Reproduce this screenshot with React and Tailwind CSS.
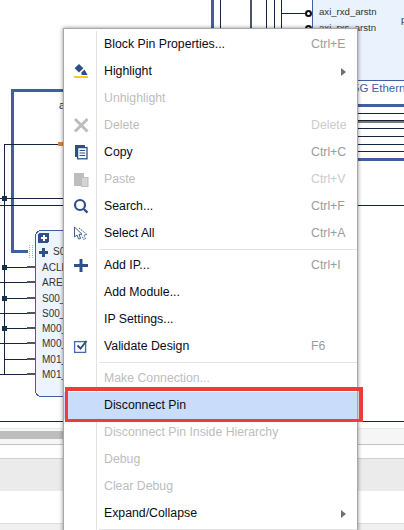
const BLUE = "#3f5f9f";
const NAVY = "#12243f";

function Row({ icon, label, shortcut, disabled, arrow, active, dimShortcut }) {
  return (
    <div className={`flex items-center h-[27px] ${active ? "bg-[#c9ddfb]" : ""}`}>
      <div className={`w-[33px] h-[27px] flex items-center pl-[9px] shrink-0 ${active ? "" : "border-r border-[#e3e3e3]"}`}>{icon}</div>
      <div className={`ml-[7px] pb-[1px] flex-1 whitespace-nowrap ${disabled ? "text-[#bdbdbd]" : "text-[#0b0b14]"}`}>{label}</div>
      <div className={`w-[46px] pb-[1px] shrink-0 whitespace-nowrap ${dimShortcut ? "text-[#cbcbcb]" : "text-[#9c9c9c]"}`}>
        {shortcut}
        {arrow && (
          <svg className="ml-[30px] mt-[2px]" width="5" height="8" viewBox="0 0 5 8"><path d="M0 0L5 4L0 8Z" fill="#707070" /></svg>
        )}
      </div>
    </div>
  );
}

const Sep = () => (
  <div className="flex h-[5px]">
    <div className="w-[33px] shrink-0 border-r border-[#e3e3e3]" />
    <div className="flex-1 pl-[2px] pt-[2px]"><div className="h-px bg-[#e3e3e3]" /></div>
  </div>
);

const Ico = ({ children }) => (
  <svg width="17" height="17" viewBox="0 0 17 17" className="block">{children}</svg>
);

const IconHighlight = () => (
  <Ico>
    <path d="M6 1L10.4 5.2L6 9.6L1.6 5.2Z" fill="#2f4f8a" />
    <path d="M8.5 9.5L11.5 6.5L14.6 12H8.5Z" fill="#2f4f8a" />
    <rect x="1" y="13" width="14" height="2" fill="#f6c92e" />
  </Ico>
);
const IconX = () => (
  <Ico>
    <path d="M2 2L14.5 14.5M14.5 2L2 14.5" stroke="#bdbdbd" strokeWidth="3" fill="none" />
  </Ico>
);
const IconCopy = () => (
  <Ico>
    <rect x="2" y="1" width="10" height="12" fill="#2f4f8a" />
    <rect x="4.6" y="3.6" width="9.4" height="11.2" fill="#fff" stroke="#2f4f8a" strokeWidth="1.3" />
    <path d="M6.5 6.5H12.2M6.5 9H12.2M6.5 11.5H12.2" stroke="#2f4f8a" strokeWidth="1" />
  </Ico>
);
const IconPaste = () => (
  <Ico>
    <rect x="1" y="2" width="10" height="13" fill="#bdbdbd" />
    <rect x="8.5" y="6.5" width="6.5" height="9" fill="#d4d4d4" stroke="#bdbdbd" strokeWidth="1" />
  </Ico>
);
const IconSearch = () => (
  <Ico>
    <circle cx="7" cy="7" r="5" fill="none" stroke="#2f4f8a" strokeWidth="2.2" />
    <path d="M10.8 11L14.5 14.7" stroke="#2f4f8a" strokeWidth="2.4" />
  </Ico>
);
const IconSelect = () => (
  <Ico>
    <path d="M1.5 2L9 9.2L6 9.4L7.6 13.6L5.6 14L4 10L1.5 12Z" fill="#fff" stroke="#3d5a92" strokeWidth="1" />
    <path d="M6 3L14 9.6L11 10L12.6 13.6L10.6 14.4L9 10.8" fill="none" stroke="#3d5a92" strokeWidth="1" strokeDasharray="1.5 0.8" />
  </Ico>
);
const IconPlus = () => (
  <Ico>
    <path d="M1 8.5H15M8 2V15" stroke="#2f4f8a" strokeWidth="3" />
  </Ico>
);
const IconValidate = () => (
  <Ico>
    <rect x="1.6" y="3.6" width="11" height="10.8" fill="#fff" stroke="#4a6aa4" strokeWidth="1.3" />
    <path d="M4.5 7.5L7.5 10.5L13.5 3" fill="none" stroke="#2f4f8a" strokeWidth="2" />
  </Ico>
);

const pinLabels = ["ACLK", "ARESI", "S00_", "S00_", "M00_", "M00_", "M01_", "M01_"];
const pins = [267, 282, 298, 313, 328, 343, 359, 374];

function Diagram() {
  return (
    <svg className="block" width="404" height="421" viewBox="0 0 404 421" shapeRendering="crispEdges">
      <rect x="211" y="0" width="3" height="30" fill={BLUE} />
      <rect x="220" y="0" width="1" height="30" fill={NAVY} />
      <rect x="250" y="0" width="2" height="30" fill="#4a5566" />
      <rect x="266" y="0" width="1" height="30" fill={NAVY} />
      <rect x="274" y="0" width="1" height="30" fill={NAVY} />
      <rect x="281" y="0" width="1" height="30" fill={NAVY} />
      <path d="M281.5 30V13.5H308" fill="none" stroke={NAVY} />
      <rect x="312" y="-2" width="100" height="82" fill="#e9f2fd" stroke={BLUE} />
      <circle cx="308.5" cy="13.5" r="2.5" fill="#fff" stroke="#111" strokeWidth="2" shapeRendering="auto" />
      <circle cx="308.5" cy="28.5" r="2.5" fill="#fff" stroke="#111" strokeWidth="2" shapeRendering="auto" />
      <g fontSize="9.6" fill="#333" shapeRendering="auto">
        <text x="319" y="15">axi_rxd_arstn</text>
        <text x="319" y="31">axi_rxs_arstn</text>
        <text x="401" y="23">p</text>
      </g>
      <text x="353" y="92" fontSize="11.5" fill={BLUE}>5G Ethern</text>
      <rect x="358" y="104" width="46" height="3" fill={BLUE} />
      <rect x="358" y="113" width="46" height="1" fill={NAVY} />
      <rect x="358" y="120" width="46" height="1" fill={NAVY} />
      <rect x="358" y="121" width="46" height="2" fill="#777" />
      <rect x="358" y="128" width="46" height="1" fill={NAVY} />
      <rect x="358" y="136" width="46" height="1" fill={NAVY} />
      <rect x="358" y="144" width="46" height="1" fill={NAVY} />
      <rect x="358" y="151" width="46" height="1" fill={NAVY} />
      <rect x="358" y="158" width="46" height="3" fill={BLUE} />
      <rect x="358" y="205" width="46" height="1" fill={NAVY} />
      <path d="M63 90.5H12.5V251.5H28" fill="none" stroke={BLUE} strokeWidth="3" />
      <text x="59" y="109" fontSize="11" fill="#333">a</text>
      <rect x="4" y="144" width="59" height="1" fill={NAVY} />
      <rect x="4" y="144" width="1" height="231" fill={NAVY} />
      <rect x="58" y="142" width="5" height="4" fill="#e8812f" />
      <rect x="0" y="198" width="63" height="1" fill={NAVY} />
      <rect x="0" y="205" width="63" height="1" fill={NAVY} />
      <rect x="2" y="196" width="5" height="5" fill="#14304f" />
      <rect x="35.5" y="230.5" width="40" height="166" rx="6" fill="#eef4fd" stroke={BLUE} />
      <rect x="38" y="233" width="11" height="10" rx="2" fill="#2f4f8a" />
      <path d="M40.5 238H46.5M43.5 235V241" stroke="#fff" strokeWidth="2" />
      <path d="M39 252.5H48M43.5 248V257" stroke="#2f4f8a" strokeWidth="2.4" />
      <path d="M29.5 245V258M32.5 245V258" stroke="#8fb0d8" strokeWidth="1" strokeDasharray="1 1" />
      <text x="53" y="255" fontSize="10" fill="#333">S0</text>
      {pins.map((y, i) => (
        <g key={y}>
          <rect x={i % 2 === 0 ? 4 : 0} y={y} width={i % 2 === 0 ? 24 : 28} height="1" fill={NAVY} />
          <rect x="27" y={y - 1} width="8" height="2" fill="#555" />
          <text x="42" y={y + 4} fontSize="10" fill="#333">{pinLabels[i]}</text>
        </g>
      ))}
      {[267, 298, 328].map((y) => (
        <rect key={y} x="2" y={y - 2} width="5" height="5" fill="#14304f" />
      ))}
    </svg>
  );
}

export default function App() {
  return (
    <div className="relative w-[404px] h-[530px] overflow-hidden bg-white font-['Liberation_Sans',sans-serif] text-[12.3px] leading-none">
      <Diagram />
      <div className="h-px bg-[#1b2a44]" />
      <div className="h-[6px]" />
      <div className="h-[17px] pt-[2px] bg-[#f6f6f6] border-t border-[#e8e8e8] border-b border-b-[#c4c4c4]">
        <div className="w-[63px] h-[8px] bg-[#bdbdbd]" />
      </div>
      <div className="h-[13px]" />
      <div className="h-[33px] bg-[#ebebeb] border-t border-[#cfcfcf]" />
      <div className="h-[32px]" />
      <div className="h-[7px] bg-[#f0f0f0] border-t border-[#dcdcdc]" />

      <div className="absolute left-[63px] top-[28px] w-[295px] h-[510px] bg-white border border-[#a8a8a8] pt-[2px] shadow-[0_0_4px_rgba(0,0,0,0.45)]">
        <Row label="Block Pin Properties..." shortcut="Ctrl+E" />
        <Row icon={<IconHighlight />} label="Highlight" arrow />
        <Row label="Unhighlight" disabled />
        <Row icon={<IconX />} label="Delete" disabled shortcut="Delete" dimShortcut />
        <Row icon={<IconCopy />} label="Copy" shortcut="Ctrl+C" />
        <Row icon={<IconPaste />} label="Paste" disabled shortcut="Ctrl+V" dimShortcut />
        <Row icon={<IconSearch />} label="Search..." shortcut="Ctrl+F" />
        <Row icon={<IconSelect />} label="Select All" shortcut="Ctrl+A" />
        <Sep />
        <Row icon={<IconPlus />} label="Add IP..." shortcut="Ctrl+I" />
        <Row label="Add Module..." />
        <Row label="IP Settings..." />
        <Row icon={<IconValidate />} label="Validate Design" shortcut="F6" />
        <Sep />
        <Row label="Make Connection..." disabled />
        <Row label="Disconnect Pin" active />
        <Row label="Disconnect Pin Inside Hierarchy" disabled />
        <Row label="Debug" disabled />
        <Row label="Clear Debug" disabled />
        <Row label="Expand/Collapse" arrow />
        <Sep />
      </div>
      <div className="absolute left-[65px] top-[387px] w-[298px] h-[35px] border-[#f23a3a] border-t-4 border-r-4 border-b-[3px] border-l-[3px]" />
    </div>
  );
}
